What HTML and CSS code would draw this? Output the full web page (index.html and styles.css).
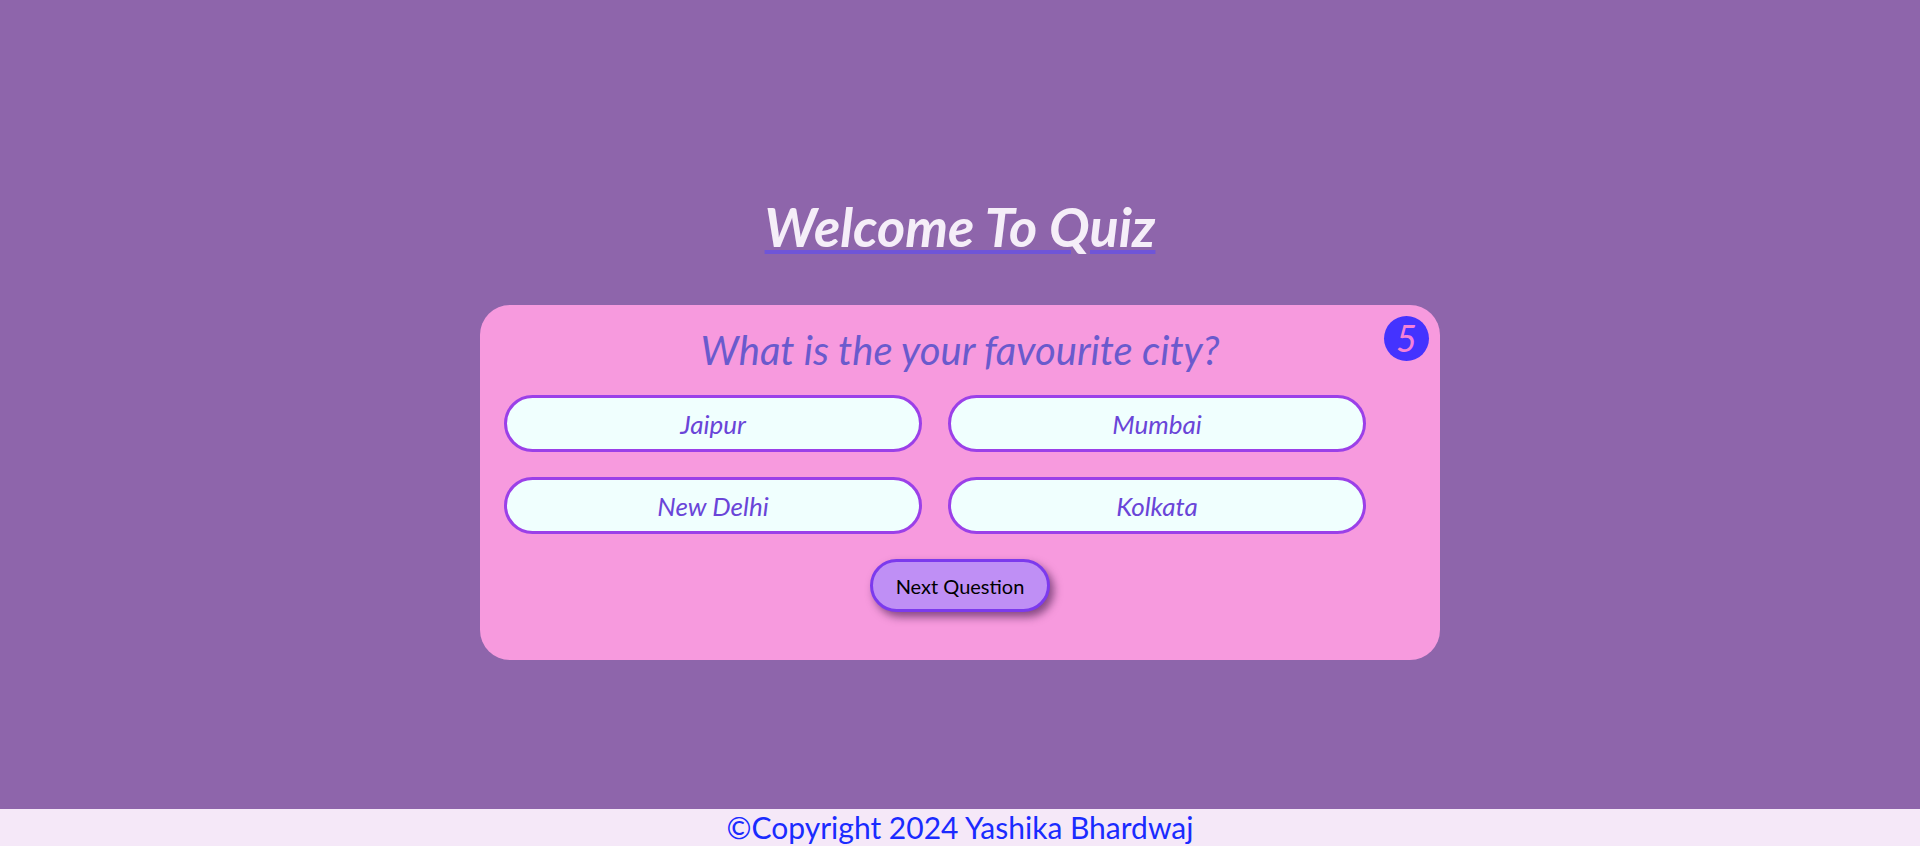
FILE: index.html
```html
<!DOCTYPE html>
<html lang="en">
<head>
<meta charset="UTF-8">
<title>Quiz</title>
<link rel="stylesheet" href="styles.css">
</head>
<body>
<div class="page">
  <main class="main">
    <h1 class="title">Welcome To Quiz</h1>
    <section class="card">
      <span class="badge">5</span>
      <h2 class="question">What is the your favourite city?</h2>
      <div class="options">
        <button class="option">Jaipur</button>
        <button class="option">Mumbai</button>
        <button class="option">New Delhi</button>
        <button class="option">Kolkata</button>
      </div>
      <button class="next">Next Question</button>
    </section>
  </main>
  <footer class="footer">©Copyright 2024 Yashika Bhardwaj</footer>
</div>
</body>
</html>
```

FILE: styles.css
```css
* { box-sizing: border-box; }
html, body { margin: 0; padding: 0; }
body {
  background: #8e65ab;
  font-family: "Lato", "Noto Sans", sans-serif;
}
.page {
  min-height: 100vh;
  display: flex;
  flex-direction: column;
}
.main {
  flex: 1;
  display: flex;
  flex-direction: column;
  align-items: center;
  padding-top: 196px;
}
.title {
  margin: 0;
  font-size: 54px;
  line-height: 62px;
  font-style: italic;
  font-weight: 700;
  color: #f5eef8;
  text-decoration: underline;
  text-decoration-color: #6f55d8;
  text-decoration-thickness: 4px;
  text-underline-offset: 3px;
}
.card {
  position: relative;
  margin-top: 47px;
  width: 960px;
  height: 355px;
  background: #f79ade;
  border-radius: 30px;
  padding: 20px 24px 0;
  display: flex;
  flex-direction: column;
  align-items: center;
}
.badge {
  position: absolute;
  top: 11px;
  right: 11px;
  width: 45px;
  height: 45px;
  border-radius: 50%;
  background: #4433ff;
  color: #f482d8;
  font-style: italic;
  font-size: 36px;
  line-height: 45px;
  text-align: center;
}
.question {
  margin: 0;
  font-size: 40px;
  line-height: 50px;
  font-weight: 400;
  font-style: italic;
  color: #6a5acd;
}
.options {
  align-self: flex-start;
  margin-top: 20px;
  display: grid;
  grid-template-columns: 418px 418px;
  column-gap: 26px;
  row-gap: 25px;
}
.option {
  height: 57px;
  border: 3px solid #9b40e8;
  border-radius: 30px;
  background: #f0fffe;
  color: #6a45d8;
  font-family: inherit;
  font-style: italic;
  font-size: 26px;
}
.next {
  margin-top: 25px;
  width: 180px;
  height: 53px;
  border: 3px solid #7c3aed;
  border-radius: 27px;
  background: #bf8ff5;
  color: #000;
  font-family: inherit;
  font-size: 20px;
  box-shadow: 4px 5px 8px rgba(60, 20, 70, 0.6);
}
.footer {
  height: 37px;
  background: #f5e8f8;
  color: #1a2bff;
  text-align: center;
  font-size: 30px;
  line-height: 37px;
}
```
